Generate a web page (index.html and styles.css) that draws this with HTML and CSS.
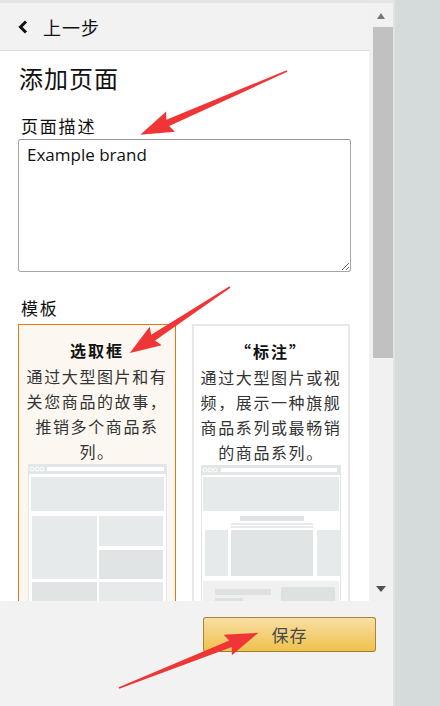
FILE: index.html
```html
<!DOCTYPE html>
<html lang="zh-CN">
<head>
<meta charset="utf-8">
<title>添加页面</title>
<link rel="stylesheet" href="styles.css">
</head>
<body>
<div class="panel">
  <div class="panel-body">
    <div class="main">
      <div class="header">
        <svg class="chev" width="10" height="14" viewBox="0 0 10 14"><polyline points="8,1.5 2.5,7 8,12.5" fill="none" stroke="#111" stroke-width="3"/></svg>
        <span class="back">上一步</span>
      </div>
      <div class="content">
        <h1 class="title">添加页面</h1>
        <div class="label">页面描述</div>
        <textarea class="desc">Example brand</textarea>
        <div class="label label-tpl">模板</div>
        <div class="cards">
          <div class="card card-selected">
            <div class="card-title">选取框</div>
            <div class="card-text">通过大型图片和有<br>关您商品的故事，<br>推销多个商品系<br>列。</div>
            <svg class="thumb thumb-a" width="140" height="140" viewBox="0 0 140 140">
              <rect x="0.5" y="0.5" width="138" height="150" fill="#fff" stroke="#e3e6e6"/>
              <rect x="0" y="0" width="139" height="10" fill="#e3e6e6"/>
              <circle cx="4" cy="5" r="2" fill="none" stroke="#fff" stroke-width="1"/>
              <circle cx="9" cy="5" r="2" fill="none" stroke="#fff" stroke-width="1"/>
              <circle cx="14" cy="5" r="2" fill="none" stroke="#fff" stroke-width="1"/>
              <rect x="19" y="3" width="117" height="4" fill="#fff"/>
              <rect x="3" y="13" width="133" height="34" fill="#e7eaea"/>
              <rect x="4" y="52" width="65" height="63" fill="#e7eaea"/>
              <rect x="71" y="52" width="64" height="30" fill="#e7eaea"/>
              <rect x="71" y="86" width="64" height="29" fill="#e1e4e4"/>
              <rect x="4" y="118" width="65" height="30" fill="#e1e4e4"/>
              <rect x="71" y="118" width="64" height="30" fill="#e7eaea"/>
            </svg>
          </div>
          <div class="card">
            <div class="card-title">“标注”</div>
            <div class="card-text">通过大型图片或视<br>频，展示一种旗舰<br>商品系列或最畅销<br>的商品系列。</div>
            <svg class="thumb" width="140" height="140" viewBox="0 0 140 140">
              <rect x="0.5" y="0.5" width="139" height="150" fill="#fff" stroke="#e3e6e6"/>
              <rect x="0" y="0" width="140" height="10" fill="#e3e6e6"/>
              <circle cx="4" cy="5" r="2" fill="none" stroke="#fff" stroke-width="1"/>
              <circle cx="9" cy="5" r="2" fill="none" stroke="#fff" stroke-width="1"/>
              <circle cx="14" cy="5" r="2" fill="none" stroke="#fff" stroke-width="1"/>
              <rect x="20" y="3" width="116" height="4" fill="#fff"/>
              <rect x="2" y="12" width="136" height="34" fill="#e7eaea"/>
              <rect x="39" y="51" width="64" height="5" fill="#e1e4e4"/>
              <rect x="30" y="58" width="82" height="2" fill="#e7eaea"/>
              <rect x="30" y="61" width="82" height="2" fill="#e7eaea"/>
              <rect x="30" y="65" width="82" height="46" fill="#e1e4e4"/>
              <rect x="4" y="65" width="23" height="46" fill="#e7eaea"/>
              <rect x="116" y="65" width="24" height="46" fill="#e7eaea"/>
              <rect x="2" y="116" width="136" height="40" fill="#eff1f1"/>
              <rect x="14" y="124" width="56" height="6" fill="#dde1e1"/>
              <rect x="14" y="133" width="28" height="4" fill="#dde1e1"/>
              <rect x="80" y="122" width="54" height="18" fill="#dde1e1"/>
            </svg>
          </div>
        </div>
      </div>
    </div>
    <div class="scrollbar">
      <span class="sb-up"></span>
      <div class="sb-thumb"></div>
      <span class="sb-down"></span>
    </div>
  </div>
  <div class="footer">
    <button class="save">保存</button>
  </div>
</div>
<div class="side"></div>

<svg class="arrows" width="440" height="706" viewBox="0 0 440 706">
  <g fill="#ef3535">
    <polygon transform="translate(287 71) rotate(156.5)" points="0,-0.8 130,-3.5 127,-11 160,0 127,11 130,3.5 0,0.8"/>
    <polygon transform="translate(230 287) rotate(146.6)" points="0,-0.8 92,-3.5 89,-11 120,0 89,11 92,3.5 0,0.8"/>
    <polygon transform="translate(119 688) rotate(-21.6)" points="0,-0.8 120,-3.5 117,-11 150,0 117,11 120,3.5 0,0.8"/>
  </g>
</svg>
</body>
</html>
```
FILE: styles.css
```css
* { box-sizing: border-box; }
html, body { margin: 0; padding: 0; }
body {
  width: 440px;
  height: 706px;
  overflow: hidden;
  display: flex;
  background: #d5dbdb;
  font-family: "Noto Sans CJK SC", "Noto Sans", sans-serif;
  color: #111;
  position: relative;
}
.panel {
  width: 393px;
  height: 706px;
  display: flex;
  flex-direction: column;
  border-top: 3px solid #e4e4e4;
  background: #f2f2f2;
}
.panel-body {
  height: 598px;
  display: flex;
}
.main {
  width: 369px;
  display: flex;
  flex-direction: column;
  background: #fff;
}
.header {
  height: 48px;
  flex: none;
  background: #f2f2f2;
  border-bottom: 1px solid #dcdcdc;
  display: flex;
  align-items: center;
  padding-left: 18px;
}
.chev { margin-right: 15px; }
.back {
  font-size: 18px;
  letter-spacing: 1px;
  line-height: 24px;
}
.content {
  flex: 1;
  overflow: hidden;
  padding: 0 18px 0 18px;
}
.title {
  margin: 12px 0 0 1px;
  font-size: 24px;
  font-weight: normal;
  line-height: 30px;
  letter-spacing: 1px;
}
.label {
  margin: 22px 0 0 3px;
  font-size: 17px;
  line-height: 22px;
  letter-spacing: 1.8px;
}
.desc {
  display: block;
  margin-top: 2px;
  width: 333px;
  height: 133px;
  border: 1px solid #a6a6a6;
  border-top-color: #949494;
  border-radius: 3px;
  padding: 3px 8px;
  font-family: "Open Sans", "Noto Sans", sans-serif;
  font-size: 17px;
  line-height: 24px;
  color: #111;
  resize: vertical;
  outline: none;
}
.label-tpl { margin-top: 25px; }
.cards {
  margin-top: 5px;
  display: flex;
  gap: 16px;
}
.card {
  width: 158px;
  height: 300px;
  flex: none;
  border: 2px solid #e8e8e8;
  border-bottom: none;
  background: #fff;
  display: flex;
  flex-direction: column;
  align-items: center;
  padding-top: 14.5px;
}
.card-selected {
  border-color: #e47911;
  border-width: 1.5px;
  background: #fcf7f1;
}
.card-title {
  font-size: 16px;
  font-weight: bold;
  line-height: 20px;
  letter-spacing: 2px;
}
.card-text {
  margin-top: 4.5px;
  font-size: 16px;
  line-height: 25px;
  letter-spacing: 1.6px;
  text-align: center;
  color: #333;
  white-space: nowrap;
}
.thumb { display: block; flex: none; }
.thumb-a { margin-left: 2px; }
.scrollbar {
  width: 24px;
  background: #f1f1f1;
  display: flex;
  flex-direction: column;
  align-items: center;
  position: relative;
}
.sb-up {
  margin-top: 10px;
  width: 0; height: 0;
  border-left: 4.5px solid transparent;
  border-right: 4.5px solid transparent;
  border-bottom: 6px solid #777;
}
.sb-thumb {
  margin-top: 8px;
  margin-left: 4px;
  width: 20px;
  height: 331px;
  background: #c1c1c1;
}
.sb-down {
  margin-top: auto;
  margin-bottom: 9px;
  width: 0; height: 0;
  border-left: 5px solid transparent;
  border-right: 5px solid transparent;
  border-top: 6px solid #505050;
}
.footer {
  flex: 1;
  background: #f2f2f2;
  display: flex;
  justify-content: flex-end;
  align-items: flex-start;
  padding: 16px 17px 0 0;
}
.save {
  width: 173px;
  height: 35px;
  border: 1px solid #a88734;
  border-bottom-color: #9c7e31;
  border-radius: 3px;
  background: linear-gradient(to bottom, #f7dfa5, #f0c14b);
  font-family: "Noto Sans CJK SC", sans-serif;
  font-size: 17px;
  letter-spacing: 1px;
  color: #4a4a4a;
  padding: 0;
}
.side {
  flex: 1;
  border-left: 2px solid #dfe3e3;
  background: #d5dbdb;
}
.arrows {
  position: absolute;
  left: 0;
  top: 0;
  pointer-events: none;
}
```
